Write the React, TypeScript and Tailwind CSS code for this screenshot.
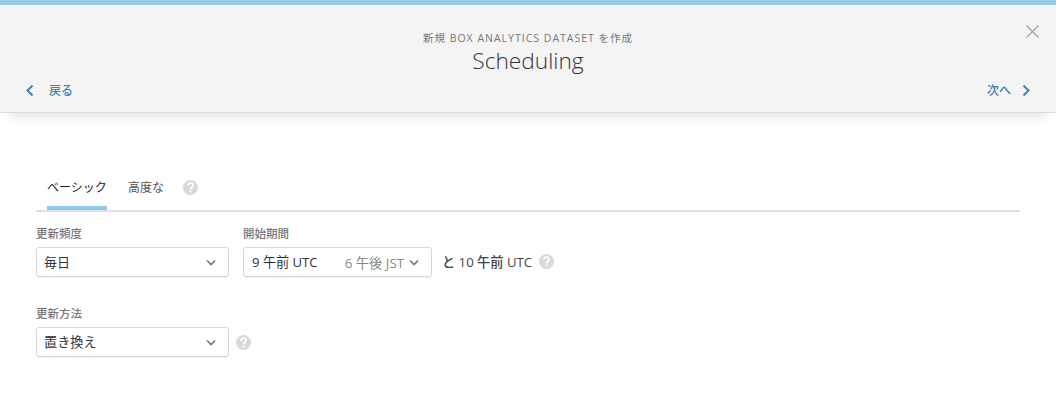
import type { ReactNode } from "react"
import clsx from "clsx"

function Chevron({ className, path }: { className?: string; path: string }) {
  return (
    <svg viewBox="0 0 12 12" className={clsx("h-3 w-3 shrink-0", className)} fill="none" stroke="currentColor">
      <path d={path} />
    </svg>
  )
}

function HelpIcon({ className }: { className?: string }) {
  return (
    <svg viewBox="0 0 15 15" className={clsx("h-[15px] w-[15px] shrink-0", className)} fill="none">
      <circle cx="7.5" cy="7.5" r="7.5" fill="#d9d9d9" />
      <path d="M5 5.7 C5 2.3 10 2.3 10 5.5 C10 7.4 7.5 7.4 7.5 9.5" stroke="#fff" strokeWidth="1.9" />
      <path d="M7.5 10.6 V12.5" stroke="#fff" strokeWidth="2" />
    </svg>
  )
}

function Select({ className, children }: { className?: string; children: ReactNode }) {
  return (
    <button
      className={clsx(
        "flex h-[30px] shrink-0 items-center rounded-[3px] border border-[#d8d8d8] bg-white pl-[7px] text-left text-[13px] whitespace-nowrap text-[#333] shadow-[0_1px_0_rgba(0,0,0,0.05)]",
        className
      )}
    >
      {children}
      <Chevron className="stroke-[1.6] text-[#777]" path="M2 4.5 L6 8.5 L10 4.5" />
    </button>
  )
}

function Label({ children }: { children: ReactNode }) {
  return <div className="h-[18px] text-[11.5px] leading-[18px] font-medium text-[#777]">{children}</div>
}

function Header() {
  return (
    <header className="h-[113px] border-t-5 border-b border-t-[#99caeb] border-b-[#dcdcdc] bg-[#f4f4f4] shadow-[0_12px_14px_-10px_rgba(0,0,0,0.14)]">
      <div className="grid h-[71px] grid-cols-[1fr_auto_1fr]">
        <div />
        <div className="pt-[25px] text-center">
          <div className="text-[10.5px] leading-4 tracking-[1px] text-[#777]">新規 BOX ANALYTICS DATASET を作成</div>
          <h1 className="text-[22.7px] leading-[29px] font-light text-[#333]">Scheduling</h1>
        </div>
        <button className="mt-5 mr-[17px] h-[13px] w-[13px] justify-self-end text-[#aaa]">
          <svg viewBox="0 0 13 13" className="h-[13px] w-[13px]" fill="none" stroke="currentColor" strokeWidth="1.5">
            <path d="M0.5 0.5 L12.5 12.5 M12.5 0.5 L0.5 12.5" />
          </svg>
        </button>
      </div>
      <nav className="flex justify-between px-6 pt-[6px] text-[12px] leading-[18px] font-medium text-[#3f83b0]">
        <button className="flex items-center">
          <Chevron className="stroke-2" path="M8.5 0.5 L3.5 5.5 L8.5 10.5" />
          <span className="ml-[13px]">戻る</span>
        </button>
        <button className="flex items-center">
          <span className="mr-[9px]">次へ</span>
          <Chevron className="stroke-2" path="M3.5 0.5 L8.5 5.5 L3.5 10.5" />
        </button>
      </nav>
    </header>
  )
}

export default function App() {
  return (
    <div className="h-[417px] w-full overflow-hidden bg-white font-['Open_Sans','Noto_Sans_CJK_JP',sans-serif]">
      <Header />
      <main className="px-9">
        <div className="mt-[62px] flex h-[37px] border-b-2 border-[#e2e2e2] pl-[11px] text-[12px] leading-[26px]">
          <button className="flex h-[35px] w-[60px] border-b-4 border-[#92c7ed] whitespace-nowrap text-[#222]">ベーシック</button>
          <button className="ml-[21px] flex h-[35px] whitespace-nowrap text-[#555]">高度な</button>
          <HelpIcon className="mt-[5px] ml-[19px]" />
        </div>

        <div className="flex pt-[13px]">
          <div>
            <Label>更新頻度</Label>
            <Select className="mt-1 w-[193px] justify-between pr-[11px]">
              <span className="pt-[2px]">毎日</span>
            </Select>
          </div>
          <div className="ml-[14px]">
            <Label>開始期間</Label>
            <div className="mt-1 flex items-center">
              <Select className="w-[189px] pr-[11px]">
                <span className="ml-px flex-1 pt-[2px] text-[13.1px]">9 午前 UTC</span>
                <span className="mr-[4px] pt-[3px] text-[13.3px] text-[#888]">6 午後 JST</span>
              </Select>
              <span className="ml-[10px] pt-[2px] text-[13.2px] font-medium whitespace-nowrap text-[#444]">と 10 午前 UTC</span>
              <HelpIcon className="mb-px ml-[7px]" />
            </div>
          </div>
        </div>

        <div className="pt-7">
          <Label>更新方法</Label>
          <div className="mt-1 flex items-center">
            <Select className="w-[193px] justify-between pr-[11px]">
              <span className="pt-[2px] text-[13.2px]">置き換え</span>
            </Select>
            <HelpIcon className="ml-[7px]" />
          </div>
        </div>
      </main>
    </div>
  )
}
